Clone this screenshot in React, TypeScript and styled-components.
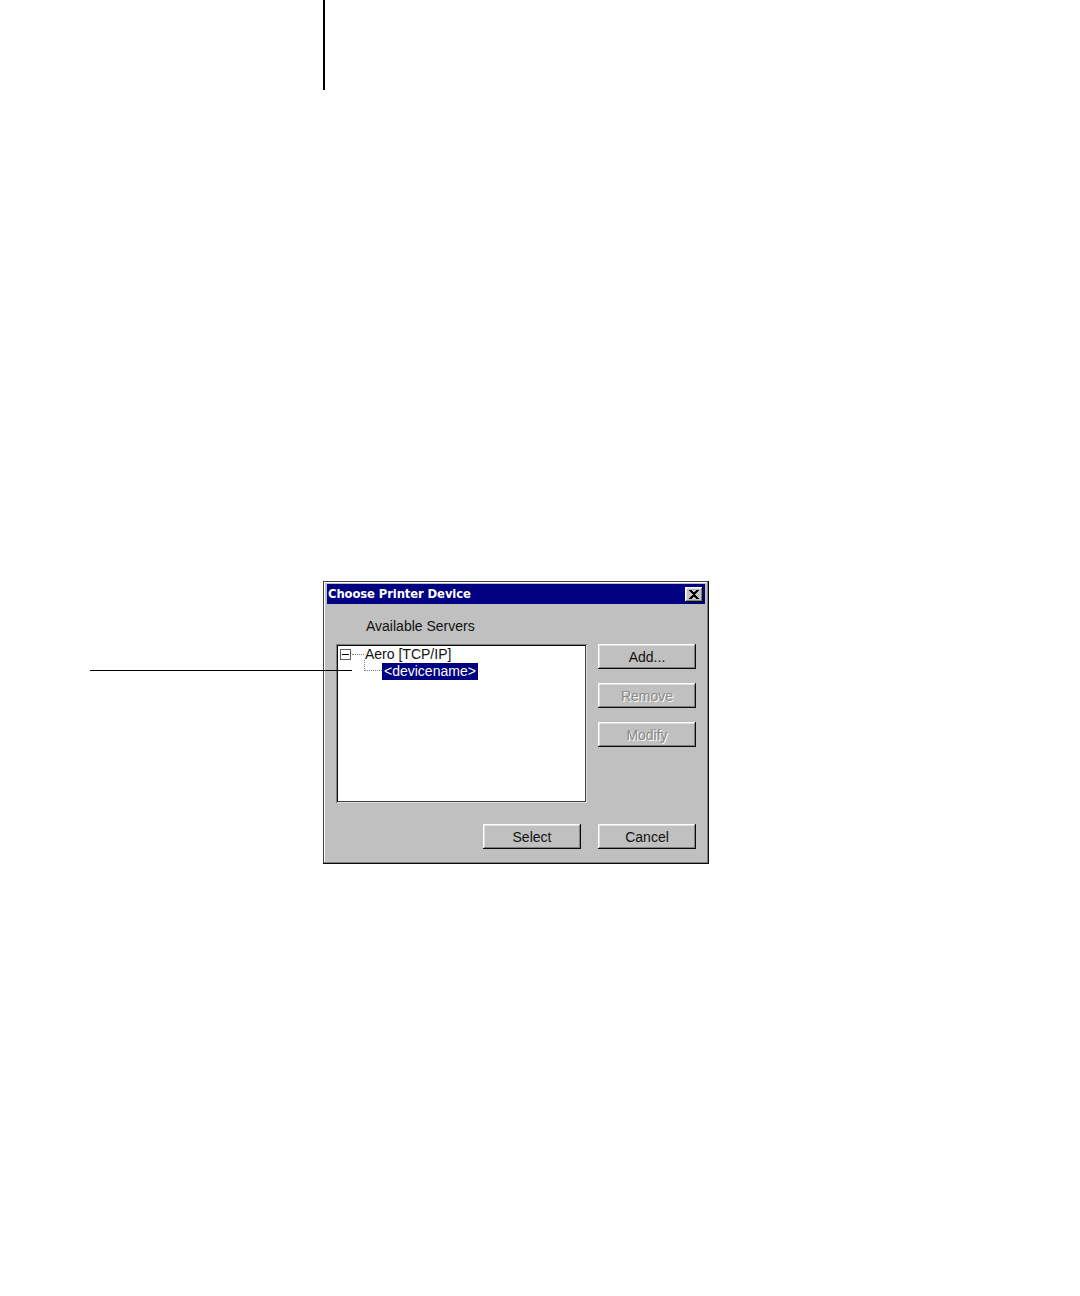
import React from "react";
import styled, { createGlobalStyle, css } from "styled-components";

const GlobalStyle = createGlobalStyle`
  html, body { margin: 0; padding: 0; background: #ffffff; }
  body { font-family: "Liberation Sans", Arial, sans-serif; }
`;

const Page = styled.div`
  position: relative;
  width: 1080px;
  height: 1296px;
  padding-left: 323px;
  box-sizing: border-box;
  overflow: hidden;
`;

const VerticalRule = styled.div`
  width: 2px;
  height: 90px;
  background: #000;
`;

const Figure = styled.div`
  position: relative;
  margin-top: 491px;
  width: 386px;
`;

const CalloutLine = styled.div`
  position: absolute;
  left: -233px;
  top: 89px;
  width: 262px;
  height: 1px;
  background: #000;
  z-index: 2;
`;

const raised = css`
  box-shadow: inset -1px -1px #0a0a0a, inset 1px 1px #ffffff,
    inset -2px -2px #808080, inset 2px 2px #dfdfdf;
`;

const Dialog = styled.div`
  width: 386px;
  height: 283px;
  box-sizing: border-box;
  padding: 3px 4px 0 4px;
  background: #c0c0c0;
  box-shadow: inset -1px -1px #0a0a0a, inset 1px 1px #404040,
    inset -2px -2px #808080, inset 2px 2px #ffffff;
  display: flex;
  flex-direction: column;
`;

const TitleBar = styled.div`
  height: 20px;
  background: #000080;
  display: flex;
  align-items: center;
  justify-content: space-between;
  padding-left: 1px;
`;

const TitleText = styled.span`
  color: #fff;
  font-family: "DejaVu Sans", Verdana, sans-serif;
  font-weight: bold;
  font-size: 11.6px;
  letter-spacing: -0.1px;
`;

const CloseButton = styled.div`
  width: 18px;
  height: 15px;
  margin-right: 2px;
  background: #c0c0c0;
  ${raised};
  display: flex;
  align-items: center;
  justify-content: center;
`;

const Body = styled.div`
  flex: 1;
  padding: 0 9px;
  display: flex;
  flex-direction: column;
  font-size: 14px;
  color: #000;
`;

const Label = styled.div`
  margin: 14px 0 10px 30px;
  height: 16px;
  line-height: 16px;
  color: #111;
`;

const MainRow = styled.div`
  display: grid;
  grid-template-columns: 251px 98px;
  column-gap: 11px;
`;

const ListBox = styled.div`
  height: 159px;
  box-sizing: border-box;
  background: #fff;
  padding: 2px 2px;
  box-shadow: inset 1px 1px #808080, inset -1px -1px #dfdfdf,
    inset 2px 2px #0a0a0a, inset -2px -2px #404040;
`;

const TreeRow = styled.div<{ $indent?: number; $top?: number; $h: number }>`
  display: flex;
  align-items: center;
  height: ${(p) => p.$h}px;
  margin-top: ${(p) => p.$top ?? 0}px;
  padding-left: ${(p) => p.$indent ?? 0}px;
`;

const Expander = styled.div`
  width: 11px;
  height: 11px;
  box-sizing: border-box;
  border: 1px solid #606060;
  display: flex;
  align-items: center;
  justify-content: center;
  background: #fff;
  &::after {
    content: "";
    width: 7px;
    height: 1px;
    background: #000;
  }
`;

const HConnector = styled.div<{ $w: number }>`
  width: ${(p) => p.$w}px;
  height: 0;
  border-top: 1px dotted #808080;
  margin: 0 1px 0 1px;
`;

const LConnector = styled.div`
  align-self: flex-start;
  width: 18px;
  height: 11px;
  margin-top: -3px;
  box-sizing: border-box;
  border-left: 1px dotted #808080;
  border-bottom: 1px dotted #808080;
`;

const NodeText = styled.span<{ $selected?: boolean }>`
  line-height: 17px;
  padding: 0 ${(p) => (p.$selected ? 2 : 0)}px;
  color: #111;
  ${(p) =>
    p.$selected &&
    css`
      background: #000080;
      color: #fff;
    `}
`;

const ButtonColumn = styled.div`
  display: flex;
  flex-direction: column;
  gap: 14px;
`;

const Button = styled.div<{ $disabled?: boolean }>`
  width: 98px;
  height: 25px;
  box-sizing: border-box;
  background: #c0c0c0;
  ${raised};
  display: flex;
  align-items: center;
  justify-content: center;
  font-size: 14px;
  color: ${(p) => (p.$disabled ? "#8a8a8a" : "#111")};
  text-shadow: ${(p) => (p.$disabled ? "1px 1px 0 #ffffff" : "none")};
`;

const Footer = styled.div`
  margin-top: 21px;
  display: flex;
  justify-content: flex-end;
  gap: 17px;
`;

export default function App() {
  return (
    <>
      <GlobalStyle />
      <Page>
        <VerticalRule />
        <Figure>
          <CalloutLine />
          <Dialog>
            <TitleBar>
              <TitleText>Choose Printer Device</TitleText>
              <CloseButton>
                <svg width="10" height="9" viewBox="0 0 10 9" shapeRendering="crispEdges">
                  <path
                    d="M0 0h3v1h-3zM7 0h3v1h-3zM1 1h3v1h-3zM6 1h3v1h-3zM2 2h6v1h-6zM3 3h4v1h-4zM4 4h2v1h-2zM3 5h4v1h-4zM2 6h6v1h-6zM1 7h3v1h-3zM6 7h3v1h-3zM0 8h3v1h-3zM7 8h3v1h-3z"
                    fill="#000"
                  />
                </svg>
              </CloseButton>
            </TitleBar>
            <Body>
              <Label>Available Servers</Label>
              <MainRow>
                <ListBox>
                  <TreeRow $indent={2} $h={16}>
                    <Expander />
                    <HConnector $w={12} />
                    <NodeText>Aero [TCP/IP]</NodeText>
                  </TreeRow>
                  <TreeRow $indent={26} $h={17} $top={1}>
                    <LConnector />
                    <NodeText $selected>&lt;devicename&gt;</NodeText>
                  </TreeRow>
                </ListBox>
                <ButtonColumn>
                  <Button>Add...</Button>
                  <Button $disabled>Remove</Button>
                  <Button $disabled>Modify</Button>
                </ButtonColumn>
              </MainRow>
              <Footer>
                <Button>Select</Button>
                <Button>Cancel</Button>
              </Footer>
            </Body>
          </Dialog>
        </Figure>
      </Page>
    </>
  );
}
